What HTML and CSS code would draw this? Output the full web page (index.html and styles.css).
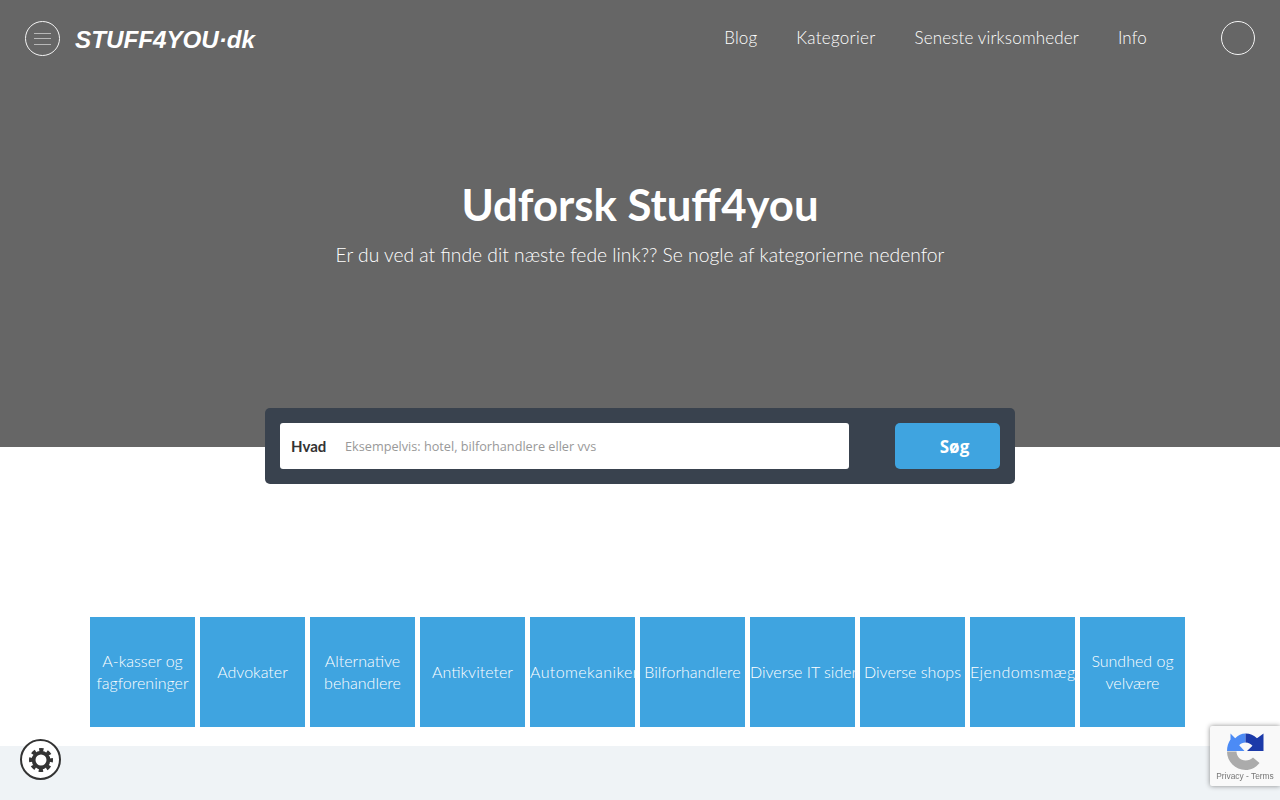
FILE: index.html
```html
<!DOCTYPE html>
<html lang="da">
<head>
<meta charset="utf-8">
<title>Stuff4you.dk</title>
<link rel="stylesheet" href="styles.css">
</head>
<body>
<header class="hero">
  <div class="topbar">
    <div class="brand">
      <button class="round menu" aria-label="Menu"><span></span><span></span><span></span></button>
      <a class="logo">STUFF4YOU·dk</a>
    </div>
    <nav class="nav">
      <a>Blog</a>
      <a class="nav-wide">Kategorier</a>
      <a>Seneste virksomheder</a>
      <a>Info</a>
      <span class="round user"></span>
    </nav>
  </div>
  <div class="intro">
    <h1>Udforsk Stuff4you</h1>
    <p>Er du ved at finde dit næste fede link?? Se nogle af kategorierne nedenfor</p>
  </div>
</header>
<form class="search">
  <label class="field">
    <span class="field-label">Hvad</span>
    <span class="field-hint">Eksempelvis: hotel, bilforhandlere eller vvs</span>
  </label>
  <button class="go" type="button">Søg</button>
</form>
<section class="cats">
  <a class="cat"><span>A-kasser og fagforeninger</span></a>
  <a class="cat"><span>Advokater</span></a>
  <a class="cat"><span>Alternative behandlere</span></a>
  <a class="cat"><span>Antikviteter</span></a>
  <a class="cat cat-long"><span>Automekaniker</span></a>
  <a class="cat"><span>Bilforhandlere</span></a>
  <a class="cat cat-line"><span>Diverse IT sider</span></a>
  <a class="cat"><span>Diverse shops</span></a>
  <a class="cat cat-long"><span>Ejendomsmægler</span></a>
  <a class="cat"><span>Sundhed og velvære</span></a>
</section>
<footer class="foot"></footer>
<button class="cookie" aria-label="Cookie">
  <svg width="24" height="24" viewBox="0 0 24 24"><circle cx="12" cy="12" r="7.4" fill="none" stroke="#333" stroke-width="3.8"/><circle cx="12" cy="12" r="10.4" fill="none" stroke="#333" stroke-width="3.2" stroke-dasharray="4.4 3.77" stroke-dashoffset="2.2"/></svg>
</button>
<div class="badge">
  <svg width="37" height="37" viewBox="0 0 37 37">
    <path fill="#ababab" d="M0 18.500H9.500C9.500 23.500 13.500 27.500 18.500 27.500 21.500 27.500 24 26.300 26 24.500L32.500 30C29 34.500 24 37 18.500 37 8.300 37 0 28.700 0 18.500Z"/>
    <path fill="#4c8bf5" d="M3.500 .5 8.200 5.200C11 2.300 14.500 .5 18.500 .5V9.500C16 9.500 13.800 10.500 12.200 12.200L17.500 18H0C0 13.500 1.300 9.800 3.500 6.500Z"/>
    <path fill="#1c3aa9" d="M18.500 .5C23 .5 27 2.300 30 5.200L36.500 .5V18H20L25.500 12.800C23.800 10.800 21.500 9.500 18.500 9.500Z"/>
  </svg>
  <small>Privacy - Terms</small>
</div>
</body>
</html>
```
FILE: styles.css
```css
* { box-sizing: border-box; }
html, body { margin: 0; height: 100%; }
body {
  font-family: "Lato", "Open Sans", sans-serif;
  background: #fff;
  height: 800px;
  overflow: hidden;
  display: flex;
  flex-direction: column;
  color: #fff;
}
.hero { height: 447px; background: #666; flex: none; }
.topbar {
  display: flex;
  justify-content: space-between;
  padding: 21px 25px 0;
}
.brand { display: flex; align-items: flex-start; gap: 15px; }
.round {
  display: block;
  border: 1px solid #f4f4f4;
  border-radius: 50%;
  background: none;
  padding: 0;
}
.menu {
  width: 35px;
  height: 35px;
  display: flex;
  flex-direction: column;
  align-items: center;
  justify-content: center;
  gap: 4.500px;
}
.menu span { display: block; width: 17px; height: 1px; background: #b8b8b8; }
.logo {
  font-family: "Liberation Sans", sans-serif;
  font-style: italic;
  font-weight: 700;
  font-size: 24.200px;
  line-height: 38px;
  white-space: nowrap;
}
.nav { display: flex; align-items: flex-start; gap: 39px; font-size: 17px; font-weight: 300; line-height: 33px; letter-spacing: .15px; }
.nav a { color: #fff; }
.nav-wide { letter-spacing: .3px; }
.user { width: 34px; height: 34px; margin-left: 35px; }
.intro { text-align: center; padding-top: 114px; }
.intro h1 {
  margin: 0;
  font-size: 43.700px;
  line-height: 62px;
  font-weight: 700;
}
.intro p { margin: 7px 0 0; font-size: 19.300px; font-weight: 300; line-height: 26px; }
.search {
  flex: none;
  width: 750px;
  height: 76px;
  margin: -39px auto 0;
  padding: 15px;
  background: #39424e;
  border-radius: 5px;
  display: flex;
  justify-content: space-between;
  position: relative;
}
.field {
  width: 569px;
  background: #fff;
  border-radius: 3px;
  display: flex;
  align-items: center;
  padding-left: 11px;
}
.field-label { width: 54px; color: #333; font-size: 15px; font-weight: 700; }
.field-hint { font-family: "Open Sans", sans-serif; color: #999; font-size: 12.700px; }
.go {
  width: 105px;
  border: 0;
  border-radius: 5px;
  background: #3fa4e0;
  color: #fff;
  font-family: "Open Sans", sans-serif;
  font-weight: 700;
  font-size: 17px;
  padding: 0 0 0 14px;
}
.cats {
  flex: none;
  display: flex;
  gap: 5px;
  padding: 133px 0 0 90px;
}
.cat {
  width: 105px;
  height: 110px;
  background: #3fa4e0;
  color: #fff;
  font-size: 16px;
  font-weight: 300;
  line-height: 22px;
  text-align: center;
  display: flex;
  align-items: center;
  overflow: hidden;
}
.cat span { display: block; width: 100%; }
.cat-long { letter-spacing: .4px; }
.cat-line { white-space: nowrap; }
.foot { flex: 1; margin-top: 19px; background: #eff3f6; }
.cookie {
  position: fixed;
  left: 20px;
  top: 739px;
  width: 41px;
  height: 41px;
  border: 2px solid #333;
  border-radius: 50%;
  background: #fff;
  padding: 0;
  display: flex;
  align-items: center;
  justify-content: center;
}
.badge {
  position: fixed;
  left: 1210px;
  top: 726px;
  width: 70px;
  height: 60px;
  background: #f9f9f9;
  box-shadow: 0 0 5px rgba(0, 0, 0, .45);
  border-radius: 2px 0 0 2px;
  display: flex;
  flex-direction: column;
  align-items: center;
  padding-top: 7px;
  overflow: hidden;
}
.badge svg { flex: none; }
.badge small {
  font-family: "Liberation Sans", sans-serif;
  font-size: 8.400px;
  line-height: 12px;
  color: #777;
  white-space: nowrap;
}
```
